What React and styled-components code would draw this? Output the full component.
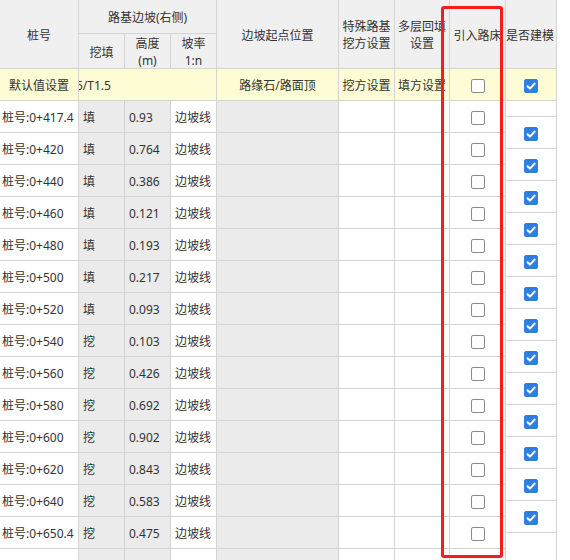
import React from 'react';
import styled, { createGlobalStyle } from 'styled-components';

const GlobalStyle = createGlobalStyle`
  body {
    margin: 0;
    background: #fff;
    font-family: "Noto Sans", "Noto Sans CJK SC", sans-serif;
    font-size: 12px;
    color: #333;
  }
`;

const Page = styled.div`
  position: relative;
  width: 570px;
  height: 560px;
  overflow: hidden;
  display: flex;
  align-items: flex-start;
`;

const Grid = styled.div`
  display: grid;
  grid-template-columns: 79px 46px 46px 46px 122px 56px 55px 56px;
  grid-template-rows: 34px 35px;
  grid-auto-rows: 32px;
`;

const tones = {
  head: '#f0f0f0',
  note: '#fefcd4',
  gray: '#ebebeb',
  white: '#ffffff',
};

const Cell = styled.div`
  box-sizing: border-box;
  border-right: 1px solid #d4d4d4;
  border-bottom: 1px solid #d4d4d4;
  background: ${p => tones[p.$tone || 'white']};
  grid-column: ${p => p.$col || 'auto'};
  grid-row: ${p => p.$row || 'auto'};
  display: flex;
  align-items: center;
  justify-content: ${p => (p.$left ? 'flex-start' : 'center')};
  padding-left: ${p => (p.$pad != null ? p.$pad : 0)}px;
  padding-top: 2px;
  text-align: center;
  line-height: 17px;
  white-space: nowrap;
  overflow: hidden;
`;

const Clipped = styled.span`
  margin-left: -3px;
`;

const SideColumn = styled.div`
  width: 51px;
  display: flex;
  flex-direction: column;
`;

const SideCell = styled.div`
  box-sizing: border-box;
  height: ${p => p.$h}px;
  border-right: 1px solid #d4d4d4;
  border-bottom: 1px solid #d4d4d4;
  background: ${p => tones[p.$tone || 'white']};
  display: flex;
  align-items: center;
  justify-content: ${p => (p.$left ? 'flex-start' : 'center')};
  padding-top: 2px;
  white-space: nowrap;
  overflow: hidden;
`;

const Box = styled.span`
  box-sizing: border-box;
  width: 14px;
  height: 14px;
  border-radius: 2px;
  border: 1px solid ${p => (p.$on ? '#2e7fe0' : '#8a8a8a')};
  background: ${p => (p.$on ? '#2e7fe0' : '#fff')};
  display: inline-flex;
  align-items: center;
  justify-content: center;
`;

const Frame = styled.div`
  position: absolute;
  left: 441px;
  top: 6px;
  width: 62px;
  height: 552px;
  box-sizing: border-box;
  border: 3px solid #fa1b1b;
  border-radius: 3px;
  pointer-events: none;
`;

function CheckBox({ on }) {
  return (
    <Box $on={on}>
      {on && (
        <svg width="12" height="12" viewBox="0 0 12 12">
          <path d="M2.5 6.2 L5 8.6 L9.6 3.6" fill="none" stroke="#fff" strokeWidth="2" strokeLinecap="round" strokeLinejoin="round" />
        </svg>
      )}
    </Box>
  );
}

const rows = [
  ['桩号:0+417.4', '填', '0.93'],
  ['桩号:0+420', '填', '0.764'],
  ['桩号:0+440', '填', '0.386'],
  ['桩号:0+460', '填', '0.121'],
  ['桩号:0+480', '填', '0.193'],
  ['桩号:0+500', '填', '0.217'],
  ['桩号:0+520', '填', '0.093'],
  ['桩号:0+540', '挖', '0.103'],
  ['桩号:0+560', '挖', '0.426'],
  ['桩号:0+580', '挖', '0.692'],
  ['桩号:0+600', '挖', '0.902'],
  ['桩号:0+620', '挖', '0.843'],
  ['桩号:0+640', '挖', '0.583'],
  ['桩号:0+650.4', '挖', '0.475'],
  null,
];

export default function App() {
  return (
    <Page>
      <GlobalStyle />
      <Grid>
        <Cell $tone="head" $row="1 / span 2" $col="1">桩号</Cell>
        <Cell $tone="head" $row="1" $col="2 / span 3">路基边坡(右侧)</Cell>
        <Cell $tone="head" $row="1 / span 2" $col="5">边坡起点位置</Cell>
        <Cell $tone="head" $row="1 / span 2" $col="6">特殊路基<br />挖方设置</Cell>
        <Cell $tone="head" $row="1 / span 2" $col="7">多层回填<br />设置</Cell>
        <Cell $tone="head" $row="1 / span 2" $col="8">引入路床</Cell>
        <Cell $tone="head" $row="2" $col="2">挖填</Cell>
        <Cell $tone="head" $row="2" $col="3">高度<br />(m)</Cell>
        <Cell $tone="head" $row="2" $col="4">坡率<br />1:n</Cell>

        <Cell $tone="note">默认值设置</Cell>
        <Cell $tone="note" $col="2 / span 3" $left><Clipped>5/T1.5</Clipped></Cell>
        <Cell $tone="note">路缘石/路面顶</Cell>
        <Cell $tone="note">挖方设置</Cell>
        <Cell $tone="note">填方设置</Cell>
        <Cell $tone="note"><CheckBox /></Cell>

        {rows.map((r, i) => (
          <React.Fragment key={i}>
            <Cell $left $pad={2}>{r && r[0]}</Cell>
            <Cell $tone="gray" $left $pad={4}>{r && r[1]}</Cell>
            <Cell $tone="gray" $left $pad={4}>{r && r[2]}</Cell>
            <Cell $left $pad={4}>{r && '边坡线'}</Cell>
            <Cell $tone="gray" />
            <Cell />
            <Cell />
            <Cell>{r && <CheckBox />}</Cell>
          </React.Fragment>
        ))}
      </Grid>

      <SideColumn>
        <SideCell $tone="head" $h={69} $left>是否建模</SideCell>
        <SideCell $tone="note" $h={32}><CheckBox on /></SideCell>
        <SideCell $h={16} />
        {Array.from({ length: 13 }).map((_, i) => (
          <SideCell key={i} $h={32}><CheckBox on /></SideCell>
        ))}
        <SideCell $h={40} />
      </SideColumn>

      <Frame />
    </Page>
  );
}
